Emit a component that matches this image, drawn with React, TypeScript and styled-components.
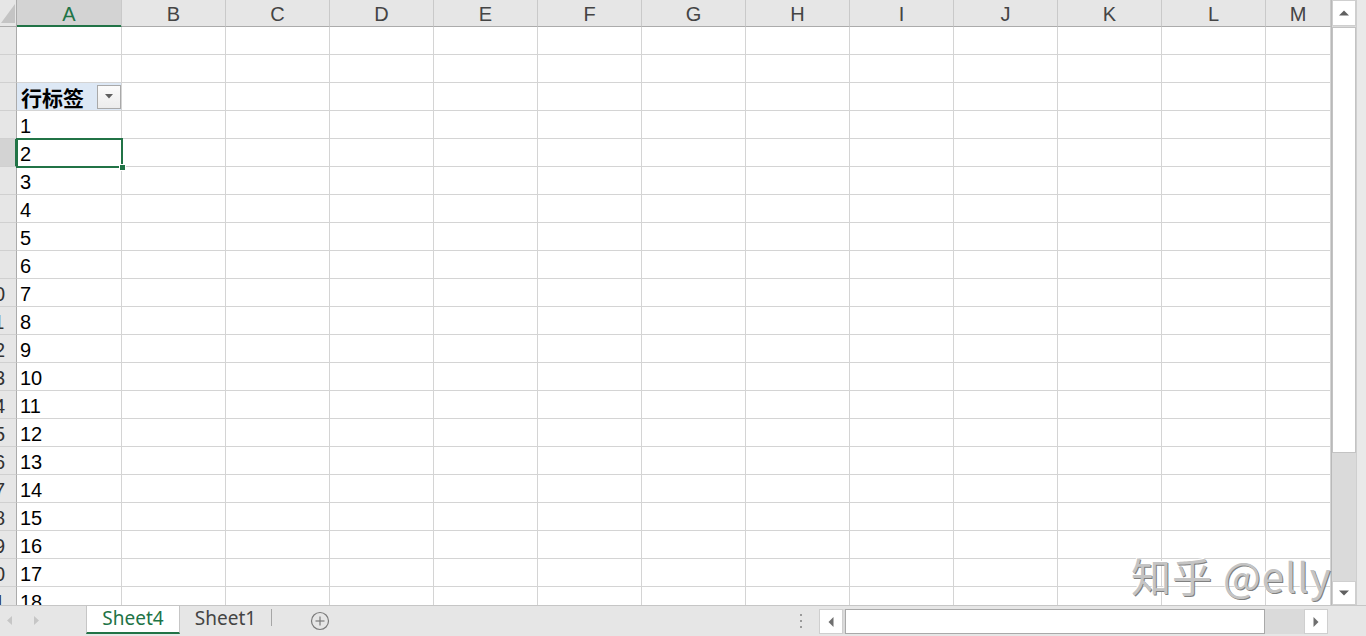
import React from "react";
import styled, { createGlobalStyle } from "styled-components";

const GlobalStyle = createGlobalStyle`
  html, body {
    margin: 0;
    padding: 0;
    overflow: hidden;
    background: #fff;
  }
  body {
    font-family: "Liberation Sans", "Noto Sans CJK SC", sans-serif;
  }
`;

const COLUMNS = ["A", "B", "C", "D", "E", "F", "G", "H", "I", "J", "K", "L", "M"];
const ROW_COUNT = 21;
const SELECTED_ROW = 5;
const PIVOT_ROW = 3;

const colWidth = (i: number) => (i === 0 ? 105 : i === COLUMNS.length - 1 ? 0 : 104);

function App() {
  const rows = Array.from({ length: ROW_COUNT }, (_, i) => i + 1);

  return (
    <>
      <GlobalStyle />
      <Window>
        <Main>
          <Sheet>
            <HeaderRow>
              <Corner>
                <svg width="14" height="19" viewBox="0 0 14 19">
                  <polygon points="14,0 14,19 0,19" fill="#c4c4c4" />
                </svg>
              </Corner>
              {COLUMNS.map((c, i) => (
                <ColHeader key={c} $width={colWidth(i)} $selected={i === 0}>
                  {c}
                </ColHeader>
              ))}
            </HeaderRow>

            {rows.map((r) => (
              <Row key={r}>
                <RowHeader $selected={r === SELECTED_ROW}>
                  <RowNumber>{r}</RowNumber>
                </RowHeader>
                {COLUMNS.map((c, i) => {
                  if (i !== 0) return <Cell key={c} $width={colWidth(i)} />;
                  if (r === PIVOT_ROW) {
                    return (
                      <PivotCell key={c} $width={colWidth(i)}>
                        <PivotLabel>行标签</PivotLabel>
                        <FilterButton>
                          <svg width="8" height="5" viewBox="0 0 8 5">
                            <polygon points="0,0 8,0 4,4.5" fill="#5f5f5f" />
                          </svg>
                        </FilterButton>
                      </PivotCell>
                    );
                  }
                  return (
                    <Cell key={c} $width={colWidth(i)} $active={r === SELECTED_ROW}>
                      {r > PIVOT_ROW ? r - PIVOT_ROW : ""}
                      {r === SELECTED_ROW && <FillHandle />}
                    </Cell>
                  );
                })}
              </Row>
            ))}
          </Sheet>

          <VScroll>
            <VScrollColumn>
              <ScrollButton $height={26}>
                <svg width="10" height="6" viewBox="0 0 10 6">
                  <polygon points="0,5.5 10,5.5 5,0.5" fill="#606060" />
                </svg>
              </ScrollButton>
              <VThumb />
              <Track />
              <ScrollButton $height={24}>
                <svg width="10" height="6" viewBox="0 0 10 6">
                  <polygon points="0,0.5 10,0.5 5,5.5" fill="#606060" />
                </svg>
              </ScrollButton>
            </VScrollColumn>
          </VScroll>
        </Main>

        <TabBar>
          <TabNav>
            <svg width="5" height="9" viewBox="0 0 5 9">
              <polygon points="5,0 5,9 0,4.5" fill="#c6c6c6" />
            </svg>
            <svg width="5" height="9" viewBox="0 0 5 9">
              <polygon points="0,0 0,9 5,4.5" fill="#c6c6c6" />
            </svg>
          </TabNav>
          <SheetTab $active>Sheet4</SheetTab>
          <SheetTab>Sheet1</SheetTab>
          <TabDivider />
          <AddSheet>
            <svg width="20" height="20" viewBox="0 0 20 20">
              <circle cx="10" cy="10" r="8.5" fill="none" stroke="#7a7a7a" strokeWidth="1.2" />
              <line x1="10" y1="5.5" x2="10" y2="14.5" stroke="#7a7a7a" strokeWidth="1.2" />
              <line x1="5.5" y1="10" x2="14.5" y2="10" stroke="#7a7a7a" strokeWidth="1.2" />
            </svg>
          </AddSheet>
          <Grip>
            <i />
            <i />
            <i />
          </Grip>
          <HScroll>
            <HButton>
              <svg width="6" height="10" viewBox="0 0 6 10">
                <polygon points="5.5,0 5.5,10 0.5,5" fill="#6f6f6f" />
              </svg>
            </HButton>
            <HThumb />
            <HTrack />
            <HButton>
              <svg width="6" height="10" viewBox="0 0 6 10">
                <polygon points="0.5,0 0.5,10 5.5,5" fill="#6f6f6f" />
              </svg>
            </HButton>
          </HScroll>
        </TabBar>

        <Watermark>知乎 @elly</Watermark>
      </Window>
    </>
  );
}

const Window = styled.div`
  position: relative;
  width: 1366px;
  height: 636px;
  display: flex;
  flex-direction: column;
  overflow: hidden;
  background: #fff;
`;

const Main = styled.div`
  display: flex;
  height: 605px;
  overflow: hidden;
`;

const Sheet = styled.div`
  width: 1331px;
  display: flex;
  flex-direction: column;
  overflow: hidden;
`;

const HeaderRow = styled.div`
  display: flex;
  height: 27px;
  flex-shrink: 0;
`;

const Corner = styled.div`
  width: 17px;
  flex-shrink: 0;
  box-sizing: border-box;
  background: #e6e6e6;
  border-right: 1px solid #ababab;
  border-bottom: 1px solid #ababab;
  display: flex;
  align-items: flex-end;
  justify-content: flex-end;
  padding: 0 1px 3px 0;
`;

const ColHeader = styled.div<{ $width: number; $selected?: boolean }>`
  ${(p) => (p.$width ? `width: ${p.$width}px; flex-shrink: 0;` : "flex: 1;")}
  box-sizing: border-box;
  height: 27px;
  background: ${(p) => (p.$selected ? "#d3d3d3" : "#e6e6e6")};
  border-right: 1px solid #c9c9c9;
  border-bottom: 1px solid ${(p) => (p.$selected ? "#217346" : "#ababab")};
  box-shadow: ${(p) => (p.$selected ? "inset 0 -1px 0 #217346" : "none")};
  color: ${(p) => (p.$selected ? "#217346" : "#444")};
  font-size: 20px;
  line-height: 23px;
  display: flex;
  align-items: flex-end;
  justify-content: center;
`;

const Row = styled.div`
  display: flex;
  height: 28px;
  flex-shrink: 0;
`;

const RowHeader = styled.div<{ $selected?: boolean }>`
  width: 17px;
  flex-shrink: 0;
  box-sizing: border-box;
  background: ${(p) => (p.$selected ? "#d3d3d3" : "#e6e6e6")};
  border-right: ${(p) => (p.$selected ? "2px solid #217346" : "1px solid #ababab")};
  border-bottom: 1px solid #d0d0d0;
  overflow: hidden;
  display: flex;
  align-items: flex-end;
`;

const RowNumber = styled.span`
  width: 40px;
  flex-shrink: 0;
  margin-left: -26px;
  text-align: center;
  font-size: 20px;
  line-height: 23px;
  color: #333;
`;

const Cell = styled.div<{ $width: number; $active?: boolean }>`
  ${(p) => (p.$width ? `width: ${p.$width}px; flex-shrink: 0;` : "flex: 1;")}
  position: relative;
  box-sizing: border-box;
  height: 28px;
  border-right: 1px solid #d4d4d4;
  border-bottom: 1px solid #d4d4d4;
  padding-left: 3px;
  display: flex;
  align-items: flex-end;
  font-size: 20px;
  line-height: 23px;
  color: #000;

  ${(p) =>
    p.$active &&
    `
    &::after {
      content: "";
      position: absolute;
      left: -1px;
      top: -1px;
      right: -2px;
      bottom: -2px;
      border: 2px solid #217346;
      z-index: 2;
      pointer-events: none;
    }
  `}
`;

const FillHandle = styled.span`
  position: absolute;
  right: -5px;
  bottom: -5px;
  width: 5px;
  height: 5px;
  background: #217346;
  border: 1px solid #fff;
  z-index: 3;
`;

const PivotCell = styled(Cell)`
  background: #dde8f5;
  justify-content: space-between;
  padding-right: 0;
`;

const PivotLabel = styled.span`
  font-weight: bold;
  font-size: 21px;
  padding-left: 1px;
`;

const FilterButton = styled.div`
  align-self: center;
  width: 24px;
  height: 24px;
  box-sizing: border-box;
  border: 1px solid #a9a9a9;
  background: linear-gradient(#fbfbfb, #ececec);
  display: flex;
  align-items: center;
  justify-content: center;
`;

const VScroll = styled.div`
  flex: 1;
  display: flex;
  background: #e9e9e9;
  border-left: 1px solid #b9b9b9;
`;

const VScrollColumn = styled.div`
  width: 24px;
  display: flex;
  flex-direction: column;
  background: #dadada;
  border-right: 1px solid #cfcfcf;
`;

const ScrollButton = styled.div<{ $height: number }>`
  height: ${(p) => p.$height}px;
  box-sizing: border-box;
  background: #fff;
  border: 1px solid #cfcfcf;
  display: flex;
  align-items: center;
  justify-content: center;
  flex-shrink: 0;
`;

const VThumb = styled.div`
  height: 426px;
  margin-top: 1px;
  box-sizing: border-box;
  background: #fff;
  border: 1px solid #c3c3c3;
  flex-shrink: 0;
`;

const Track = styled.div`
  flex: 1;
`;

const TabBar = styled.div`
  height: 31px;
  box-sizing: border-box;
  border-top: 1px solid #c6c6c6;
  background: #e6e6e6;
  display: flex;
  align-items: flex-start;
  padding-right: 38px;
  font-family: "Noto Sans", "Liberation Sans", sans-serif;
`;

const TabNav = styled.div`
  width: 86px;
  height: 29px;
  display: flex;
  align-items: center;
  gap: 22px;
  padding-left: 7px;
  box-sizing: border-box;
`;

const SheetTab = styled.div<{ $active?: boolean }>`
  width: ${(p) => (p.$active ? 94 : 91)}px;
  height: 28px;
  box-sizing: border-box;
  background: ${(p) => (p.$active ? "#fff" : "transparent")};
  border-left: ${(p) => (p.$active ? "1px solid #c6c6c6" : "none")};
  border-right: ${(p) => (p.$active ? "1px solid #c6c6c6" : "none")};
  border-bottom: 2px solid ${(p) => (p.$active ? "#217346" : "transparent")};
  color: ${(p) => (p.$active ? "#217346" : "#444")};
  font-size: 19px;
  line-height: 24px;
  text-align: center;
`;

const TabDivider = styled.div`
  width: 1px;
  height: 17px;
  margin-top: 3px;
  background: #a6a6a6;
`;

const AddSheet = styled.div`
  margin-left: 38px;
  margin-top: 5px;
  width: 20px;
  height: 20px;
`;

const Grip = styled.div`
  margin-left: auto;
  margin-right: 17px;
  margin-top: 8px;
  display: flex;
  flex-direction: column;
  gap: 4px;

  i {
    display: block;
    width: 2px;
    height: 2px;
    background: #9a9a9a;
  }
`;

const HScroll = styled.div`
  width: 509px;
  height: 25px;
  margin-top: 3px;
  display: flex;
  background: #dadada;
`;

const HButton = styled.div`
  width: 24px;
  height: 25px;
  box-sizing: border-box;
  background: #fff;
  border: 1px solid #cfcfcf;
  display: flex;
  align-items: center;
  justify-content: center;
`;

const HThumb = styled.div`
  width: 420px;
  margin-left: 2px;
  box-sizing: border-box;
  background: #fff;
  border: 1px solid #a9a9a9;
`;

const HTrack = styled.div`
  flex: 1;
`;

const Watermark = styled.div`
  position: absolute;
  left: 1131px;
  top: 550px;
  font-family: "Noto Sans CJK SC", "Noto Sans", sans-serif;
  font-size: 40px;
  line-height: 50px;
  letter-spacing: 1px;
  color: #c4c4c4;
  text-shadow: 1px 1px 0 #808080, -1px -1px 0 #fff;
  white-space: nowrap;
  pointer-events: none;
`;

export default App;
